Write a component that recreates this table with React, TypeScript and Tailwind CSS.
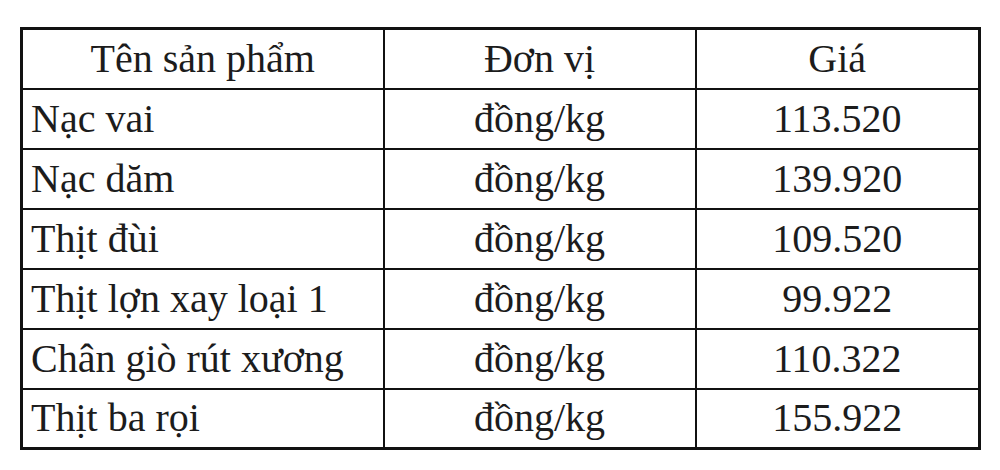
const rows = [
  ["Nạc vai", "đồng/kg", "113.520"],
  ["Nạc dăm", "đồng/kg", "139.920"],
  ["Thịt đùi", "đồng/kg", "109.520"],
  ["Thịt lợn xay loại 1", "đồng/kg", "99.922"],
  ["Chân giò rút xương", "đồng/kg", "110.322"],
  ["Thịt ba rọi", "đồng/kg", "155.922"],
];

export default function App() {
  return (
    <div className="h-[470px] w-[1000px] bg-white pl-[20px] pt-[27px] font-['Liberation_Serif',serif] text-[40px] leading-none text-[#1c1c1c]">
      <table className="table-fixed border-collapse border-[3px] border-[#111]">
        <colgroup>
          <col className="w-[362px]" />
          <col className="w-[312px]" />
          <col className="w-[284px]" />
        </colgroup>
        <thead>
          <tr className="h-[60px]">
            <th className="border-2 border-[#111] text-center font-normal">Tên sản phẩm</th>
            <th className="border-2 border-[#111] text-center font-normal">Đơn vị</th>
            <th className="border-2 border-[#111] text-center font-normal">Giá</th>
          </tr>
        </thead>
        <tbody>
          {rows.map(([name, unit, price]) => (
            <tr key={name} className="h-[60px]">
              <td className="border-2 border-[#111] pl-2 text-left">{name}</td>
              <td className="border-2 border-[#111] text-center">{unit}</td>
              <td className="border-2 border-[#111] text-center">{price}</td>
            </tr>
          ))}
        </tbody>
      </table>
    </div>
  );
}
